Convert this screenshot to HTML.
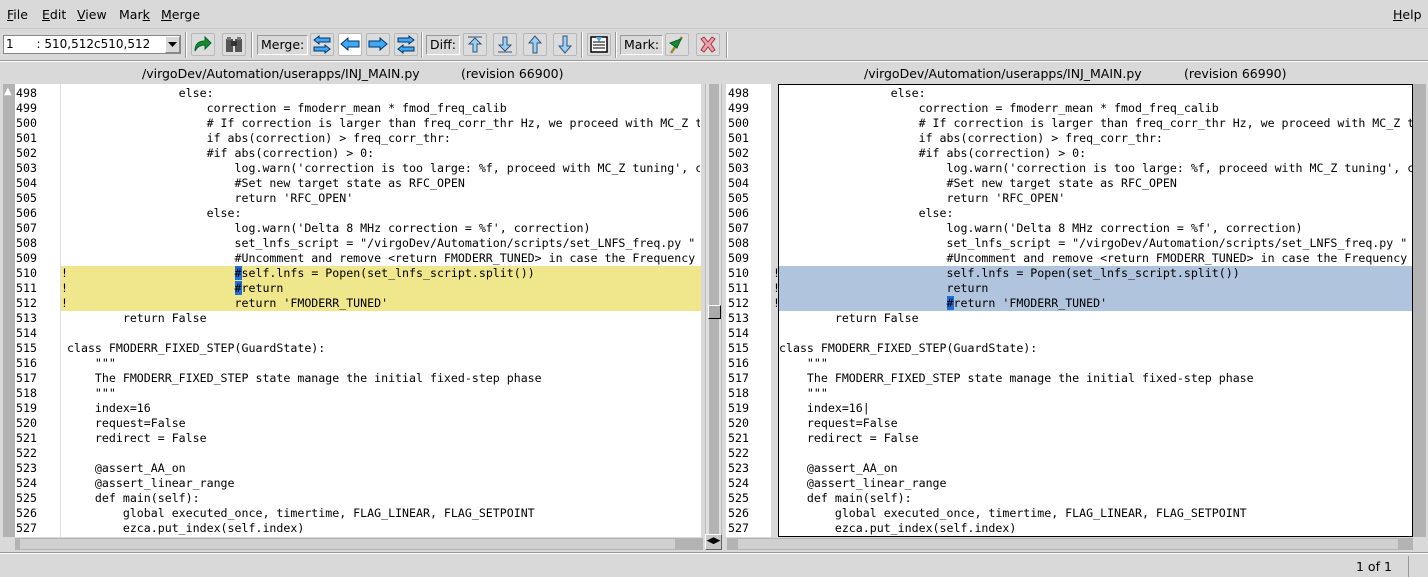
<!DOCTYPE html>
<html><head><meta charset="utf-8"><style>
*{box-sizing:border-box;margin:0;padding:0}
body{width:1428px;height:577px;background:#d9d9d9;font-family:"DejaVu Sans","Liberation Sans",sans-serif;font-size:12.5px;color:#000;position:relative;overflow:hidden}
.a{position:absolute}
.menu span{position:absolute;top:7px}
.btn{position:absolute;top:33px;width:24px;height:23px;border:1px solid #b8b8b8;border-radius:2px;background:#dcdcdc}
.lbl{position:absolute;top:35px;height:20px;border:1px solid #999;border-right-color:#fff;border-bottom-color:#fff;padding:1px 3px;font-size:12.5px;background:#d9d9d9}
.sep{position:absolute;top:32px;width:2px;height:26px;border-left:1px solid #999;border-right:1px solid #fff}
.code{font-family:"DejaVu Sans Mono","Liberation Mono",monospace;font-size:11.6px;line-height:15px;white-space:pre}
.hl1{background:#f0e68c}.hl2{background:#b0c4de}
.cur{background:#1e6fd9;color:#000}
</style></head><body>
<div class="menu">
<span style="left:7px"><u>F</u>ile</span>
<span style="left:42px"><u>E</u>dit</span>
<span style="left:77px"><u>V</u>iew</span>
<span style="left:119px">Mar<u>k</u></span>
<span style="left:161px"><u>M</u>erge</span>
<span style="left:1393px"><u>H</u>elp</span>
</div>
<div class="a" style="left:0;top:28px;width:1428px;height:1px;background:#c8c8c8"></div>
<!-- combo -->
<div class="a" style="left:3px;top:35px;width:178px;height:19px;background:#fff;border:1px solid #888;font-size:12px;padding:1px 2px">1&nbsp;&nbsp;&nbsp;&nbsp;&nbsp;&nbsp;: 510,512c510,512</div>
<div class="a" style="left:165px;top:36px;width:15px;height:17px;background:#d9d9d9;border:1px solid #fff;border-right-color:#888;border-bottom-color:#888"><svg width="13" height="15"><path d="M2 5h9l-4.5 5z"/></svg></div>
<div class="sep" style="left:185px"></div>
<div class="btn" style="left:191px"><svg width="22" height="21"><path d="M3 17c0-7 4-10 10-10V3l6 6-6 6v-4c-5 0-8 2-10 6z" fill="#1a8a2a" stroke="#063" stroke-width="1"/></svg></div>
<div class="btn" style="left:222px"><svg width="22" height="21"><rect x="3" y="5" width="7" height="13" fill="#555"/><rect x="12" y="5" width="7" height="13" fill="#555"/><rect x="8" y="7" width="6" height="5" fill="#333"/><rect x="4" y="3" width="4" height="3" fill="#777"/><rect x="14" y="3" width="4" height="3" fill="#777"/></svg></div>
<div class="sep" style="left:251px"></div>
<div class="lbl" style="left:257px">Merge:</div>
<div class="btn" style="left:310px"><svg width="22" height="21"><path d="M3 6l5-4v2h11v4H8v2zM19 15l-5-4v2H3v4h11v2z" fill="#3fa9f5" stroke="#036" stroke-width="1"/></svg></div>
<div class="btn" style="left:338px;background:#fff"><svg width="22" height="21"><path d="M2 10l7-6v3h11v6H9v3z" fill="#3fa9f5" stroke="#036" stroke-width="1"/></svg></div>
<div class="btn" style="left:366px"><svg width="22" height="21"><path d="M20 10l-7-6v3H2v6h11v3z" fill="#3fa9f5" stroke="#036" stroke-width="1"/></svg></div>
<div class="btn" style="left:394px"><svg width="22" height="21"><path d="M19 6l-5-4v2H3v4h11v2zM3 15l5-4v2h11v4H8v2z" fill="#3fa9f5" stroke="#036" stroke-width="1"/></svg></div>
<div class="sep" style="left:421px"></div>
<div class="lbl" style="left:426px">Diff:</div>
<div class="btn" style="left:463px"><svg width="22" height="21"><path d="M4 3h14M11 4l-6 6h4v8h4v-8h4z" fill="#9cd0f5" stroke="#357" stroke-width="1"/></svg></div>
<div class="btn" style="left:493px"><svg width="22" height="21"><path d="M4 18h14M11 17l-6-6h4V3h4v8h4z" fill="#9cd0f5" stroke="#357" stroke-width="1"/></svg></div>
<div class="btn" style="left:523px"><svg width="22" height="21"><path d="M11 2l-6 7h4v10h4V9h4z" fill="#9cd0f5" stroke="#357" stroke-width="1"/></svg></div>
<div class="btn" style="left:553px"><svg width="22" height="21"><path d="M11 19l-6-7h4V2h4v10h4z" fill="#9cd0f5" stroke="#357" stroke-width="1"/></svg></div>
<div class="sep" style="left:581px"></div>
<div class="btn" style="left:587px"><svg width="22" height="21"><rect x="3" y="3" width="16" height="15" fill="#fff" stroke="#000" stroke-width="1.5"/><path d="M5 8h12M5 11h12M5 14h12" stroke="#000"/><path d="M8 3h6l-3 5z" fill="#3fa9f5"/></svg></div>
<div class="sep" style="left:615px"></div>
<div class="lbl" style="left:620px">Mark:</div>
<div class="btn" style="left:665px"><svg width="22" height="21"><path d="M5 19L16 3" stroke="#9a8a30" stroke-width="2.5"/><path d="M15 5L4 9l7 5z" fill="#1a8a2a" stroke="#063"/></svg></div>
<div class="btn" style="left:696px"><svg width="22" height="21"><path d="M4 5l3-2 4 5 4-5 3 2-4 5 4 6-3 2-4-5-4 5-3-2 4-6z" fill="#e7a0b0" stroke="#a33"/></svg></div>
<div class="sep" style="left:726px"></div>
<div class="a" style="left:0;top:60px;width:1428px;height:2px;border-top:1px solid #999;border-bottom:1px solid #fff"></div>
<!-- headers -->
<div class="a" style="left:142px;top:66px;font-size:12.5px">/virgoDev/Automation/userapps/INJ_MAIN.py</div>
<div class="a" style="left:461px;top:66px;font-size:12.5px">(revision 66900)</div>
<div class="a" style="left:864px;top:66px;font-size:12.5px">/virgoDev/Automation/userapps/INJ_MAIN.py</div>
<div class="a" style="left:1184px;top:66px;font-size:12.5px">(revision 66990)</div>

<!-- left pane -->
<div class="a" style="left:3px;top:84px;width:12px;height:453px;background:#b3b3b3"></div>
<div class="a" style="left:4px;top:86px;color:#fff;font-size:10px">▲</div>
<div class="a" style="left:15px;top:84px;width:45px;height:453px;background:#fff"></div>
<div class="a" style="left:60px;top:84px;width:1px;height:453px;background:#ddd"></div>
<div class="a" style="left:61px;top:84px;width:640px;height:453px;background:#fff;overflow:hidden"></div>
<!-- right pane -->
<div class="a" style="left:705px;top:84px;width:17px;height:453px;background:#e0e0e0;border-left:1px solid #bbb;border-right:1px solid #bbb"></div>
<div class="a" style="left:709px;top:84px;width:10px;height:453px;background:#b3b3b3"></div>
<div class="a" style="left:708px;top:305px;width:13px;height:14px;background:#aaa;border:1px solid #fff;border-right-color:#000;border-bottom-color:#000"></div>
<div class="a" style="left:726px;top:84px;width:45px;height:453px;background:#fff"></div>
<div class="a" style="left:778px;top:84px;width:635px;height:453px;background:#fff;border:1px solid #000"></div>
<div class="a" style="left:1413px;top:84px;width:13px;height:453px;background:#b3b3b3"></div>

<div class="a code" style="left:61px;top:266px;width:640px;height:45px" ><div class="hl1" style="height:45px"></div></div>
<div class="a code" style="left:779px;top:266px;width:633px;height:45px"><div class="hl2" style="height:45px"></div></div>

<div class="a code" style="left:16px;top:86px">498
499
500
501
502
503
504
505
506
507
508
509
510
511
512
513
514
515
516
517
518
519
520
521
522
523
524
525
526
527</div>
<div class="a code" style="left:728px;top:86px">498
499
500
501
502
503
504
505
506
507
508
509
510
511
512
513
514
515
516
517
518
519
520
521
522
523
524
525
526
527</div>
<div class="a code" style="left:61px;top:266px">!
!
!</div>
<div class="a code" style="left:773px;top:266px">!
!
!</div>

<div class="a" style="left:67px;top:86px;width:633px;height:451px;overflow:hidden"><div class="code">                else:
                    correction = fmoderr_mean * fmod_freq_calib
                    # If correction is larger than freq_corr_thr Hz, we proceed with MC_Z tuning
                    if abs(correction) &gt; freq_corr_thr:
                    #if abs(correction) &gt; 0:
                        log.warn('correction is too large: %f, proceed with MC_Z tuning', correction)
                        #Set new target state as RFC_OPEN
                        return 'RFC_OPEN'
                    else:
                        log.warn('Delta 8 MHz correction = %f', correction)
                        set_lnfs_script = "/virgoDev/Automation/scripts/set_LNFS_freq.py " + str
                        #Uncomment and remove &lt;return FMODERR_TUNED&gt; in case the Frequency
                        <span class="cur">#</span>self.lnfs = Popen(set_lnfs_script.split())
                        <span class="cur">#</span>return
                        return 'FMODERR_TUNED'
        return False

class FMODERR_FIXED_STEP(GuardState):
    """
    The FMODERR_FIXED_STEP state manage the initial fixed-step phase
    """
    index=16
    request=False
    redirect = False

    @assert_AA_on
    @assert_linear_range
    def main(self):
        global executed_once, timertime, FLAG_LINEAR, FLAG_SETPOINT
        ezca.put_index(self.index)</div></div>

<div class="a" style="left:779px;top:86px;width:633px;height:451px;overflow:hidden"><div class="code">                else:
                    correction = fmoderr_mean * fmod_freq_calib
                    # If correction is larger than freq_corr_thr Hz, we proceed with MC_Z tuning
                    if abs(correction) &gt; freq_corr_thr:
                    #if abs(correction) &gt; 0:
                        log.warn('correction is too large: %f, proceed with MC_Z tuning', correction)
                        #Set new target state as RFC_OPEN
                        return 'RFC_OPEN'
                    else:
                        log.warn('Delta 8 MHz correction = %f', correction)
                        set_lnfs_script = "/virgoDev/Automation/scripts/set_LNFS_freq.py " + str
                        #Uncomment and remove &lt;return FMODERR_TUNED&gt; in case the Frequency
                        self.lnfs = Popen(set_lnfs_script.split())
                        return
                        <span class="cur">#</span>return 'FMODERR_TUNED'
        return False

class FMODERR_FIXED_STEP(GuardState):
    """
    The FMODERR_FIXED_STEP state manage the initial fixed-step phase
    """
    index=16|
    request=False
    redirect = False

    @assert_AA_on
    @assert_linear_range
    def main(self):
        global executed_once, timertime, FLAG_LINEAR, FLAG_SETPOINT
        ezca.put_index(self.index)</div></div>

<!-- horizontal scrollbars -->
<div class="a" style="left:15px;top:538px;width:688px;height:12px;background:#b3b3b3"></div>
<div class="a" style="left:20px;top:539px;width:655px;height:10px;background:#d0d0d0"></div>
<div class="a" style="left:705px;top:534px;width:17px;height:16px;background:#c8c8c8;border:1px solid #fff;border-right-color:#666;border-bottom-color:#666;font-size:9px;line-height:13px;text-align:center">◀▶</div>
<div class="a" style="left:727px;top:538px;width:686px;height:12px;background:#b3b3b3"></div>
<div class="a" style="left:738px;top:539px;width:660px;height:10px;background:#d0d0d0"></div>
<div class="a" style="left:0;top:552px;width:1428px;height:2px;border-top:1px solid #999;border-bottom:1px solid #fff"></div>
<div class="a" style="left:1408px;top:556px;width:1px;height:21px;background:#999"></div>
<div class="a" style="left:1356px;top:559px;font-size:12.5px">1 of 1</div>
</body></html>
